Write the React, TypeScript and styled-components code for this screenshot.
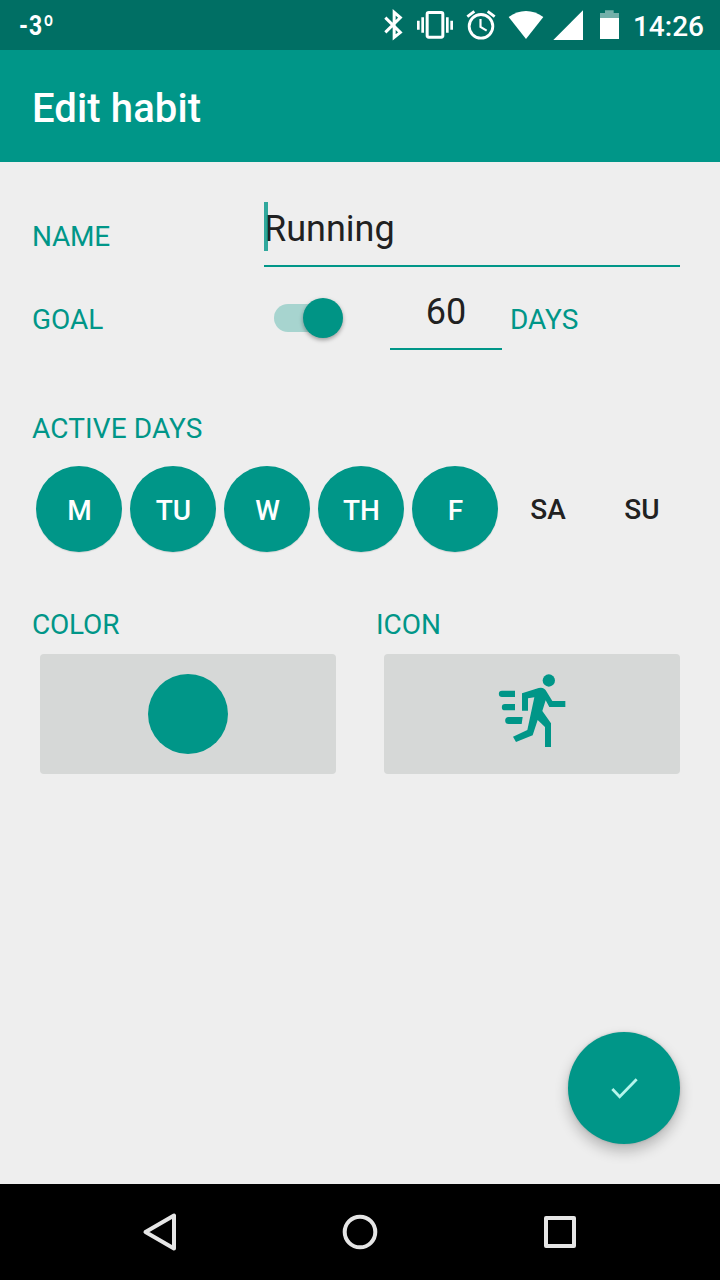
import React from "react";
import styled, { createGlobalStyle } from "styled-components";

const TEAL = "#009688";

const GlobalStyle = createGlobalStyle`
  body { margin: 0; background: #eeeeee; font-family: Roboto, "Noto Sans", sans-serif; }
  * { box-sizing: border-box; }
`;

const Screen = styled.div`
  width: 720px;
  height: 1280px;
  display: flex;
  flex-direction: column;
  background: #eeeeee;
  overflow: hidden;
`;

const StatusBar = styled.header`
  height: 50px;
  display: flex;
  justify-content: space-between;
  padding: 0 16px 0 19px;
  background: #006f64;
  color: #fff;
`;

const Temperature = styled.span`
  font-size: 28px;
  font-weight: 700;
  letter-spacing: 1.2px;
  line-height: 51px;
  transform: scaleX(0.82);
  transform-origin: left;
`;

const StatusIcons = styled.div`
  display: flex;
  svg { display: block; height: 50px; }
`;

const Clock = styled.span`
  margin-left: 13px;
  font-size: 28px;
  font-weight: 500;
  line-height: 53px;
`;

const AppBar = styled.div`
  height: 112px;
  padding-left: 32px;
  background: ${TEAL};
`;

const Title = styled.h1`
  margin: 0;
  color: #fff;
  font-size: 40px;
  font-weight: 500;
  letter-spacing: 0.12px;
  line-height: 117px;
`;

const Form = styled.main`
  flex: 1;
  display: flex;
  flex-direction: column;
  padding: 38px 40px 40px 32px;
`;

const Row = styled.div<{ $top?: number }>`
  display: flex;
  align-items: flex-start;
  margin-top: ${(p) => p.$top ?? 0}px;
`;

const Label = styled.span<{ $width?: number; $tracking?: number }>`
  display: block;
  width: ${(p) => (p.$width ? `${p.$width}px` : "auto")};
  color: ${TEAL};
  font-size: 28px;
  letter-spacing: ${(p) => p.$tracking ?? 0}px;
  line-height: 33px;
`;

const FieldLabel = styled(Label)`
  padding-top: 20px;
`;

const UnitLabel = styled(FieldLabel)`
  margin-left: 8px;
`;

const Field = styled.div<{ $width: number; $center?: boolean }>`
  position: relative;
  width: ${(p) => p.$width}px;
  height: 67px;
  border-bottom: 2px solid ${TEAL};
  color: #212121;
  font-size: 36px;
  line-height: 59px;
  text-align: ${(p) => (p.$center ? "center" : "left")};
`;

const Caret = styled.i`
  position: absolute;
  left: 0;
  top: 2px;
  width: 4px;
  height: 49px;
  background: rgba(0, 150, 136, 0.8);
`;

const Toggle = styled.div`
  display: flex;
  align-items: center;
  justify-content: flex-end;
  width: 69px;
  height: 28px;
  margin: 21px 47px 0 10px;
  border-radius: 14px;
  background: linear-gradient(to right, #a7d4cf 50px, transparent 50px);
`;

const Thumb = styled.div`
  width: 40px;
  height: 40px;
  flex: none;
  border-radius: 50%;
  background: #009485;
  box-shadow: 0 2px 4px rgba(0, 0, 0, 0.35);
`;

const Days = styled.div`
  display: flex;
  gap: 8px;
  margin: 21px 0 0 4px;
`;

const Day = styled.div<{ $active: boolean }>`
  flex: none;
  width: 86px;
  height: 86px;
  padding: ${(p) => (p.$active ? "0 0 0 1px" : "0 2px 0 0")};
  border-radius: 50%;
  background: ${(p) => (p.$active ? TEAL : "transparent")};
  color: ${(p) => (p.$active ? "#fff" : "#212121")};
  box-shadow: ${(p) => (p.$active ? "0 1px 1px rgba(0, 0, 0, 0.1)" : "none")};
  font-size: 28px;
  font-weight: 500;
  line-height: ${(p) => (p.$active ? 90 : 88)}px;
  text-align: center;
`;

const Pickers = styled.div`
  display: grid;
  grid-template-columns: 304px 304px;
  gap: 40px;
  margin-top: 56px;
`;

const PickerButton = styled.div`
  display: flex;
  align-items: center;
  justify-content: center;
  height: 120px;
  margin: 13px 0 0 8px;
  border-radius: 4px;
  background: #d6d8d7;
`;

const Swatch = styled.div`
  width: 80px;
  height: 80px;
  border-radius: 50%;
  background: ${TEAL};
`;

const Fab = styled.div`
  display: flex;
  align-items: center;
  justify-content: center;
  align-self: flex-end;
  width: 112px;
  height: 112px;
  margin-top: auto;
  border-radius: 50%;
  background: ${TEAL};
  box-shadow: 0 7px 14px rgba(0, 0, 0, 0.24), 0 0 3px rgba(0, 0, 0, 0.15);
`;

const NavBar = styled.nav`
  height: 96px;
  display: flex;
  justify-content: center;
  align-items: center;
  gap: 152px;
  background: #000;
`;

const navStroke = { fill: "none", stroke: "#e6e6e6", strokeWidth: 4, strokeLinejoin: "round" as const };

const Bluetooth = () => (
  <svg width="27" viewBox="38 0 81 150">
    <path d="M45 53 L90 97 L71.500 112 V37 L90 53 L45 97" fill="none" stroke="#fff" strokeWidth="9" />
  </svg>
);

const Vibrate = () => (
  <svg width="50" viewBox="120 0 150 150" fill="#fff">
    <rect x="171.500" y="37.500" width="47" height="74" rx="5" fill="none" stroke="#fff" strokeWidth="9" />
    <path d="M141 62h8v27h-8zM154 52h8v46h-8zM228 52h8v46h-8zM241 62h8v27h-8z" />
  </svg>
);

const Alarm = () => (
  <svg width="40" viewBox="270 0 120 150" fill="none" stroke="#fff">
    <circle cx="333" cy="79" r="35.500" strokeWidth="8.500" />
    <path d="M292 50 L313 34 M374 50 L353 34" strokeWidth="8.500" />
    <path d="M331.500 57 V81 L350 92" strokeWidth="6.500" />
  </svg>
);

const Wifi = () => (
  <svg width="50" viewBox="390 0 150 150">
    <path d="M416 51 Q440 33 468 33 Q496 33 520 51 L468 117Z" fill="#fff" />
  </svg>
);

const Signal = () => (
  <svg width="40" viewBox="540 0 120 150">
    <path d="M550 120 L639 31 V120Z" fill="#fff" />
  </svg>
);

const Battery = () => (
  <svg width="30" viewBox="660 0 90 150" fill="#fff">
    <path d="M690 54 V39 H705 V31 H731 V39 H747 V54Z" opacity="0.45" />
    <path d="M690 54 H747 V117 H690Z" />
  </svg>
);

const Runner = () => (
  <svg width="100" height="80" viewBox="6 42 300 240" fill={TEAL}>
    <circle cx="206.500" cy="61.500" r="18.500" />
    <path d="M66 92 H105 V111 H66 A9.500 9.500 0 0 1 66 92Z M75 132 H105 V151 H75 A9.500 9.500 0 0 1 75 132Z M86 171 H128 L125 192 H86 A10 10 0 0 1 86 171Z" />
    <path d="M126 152 V100 L176 84 Q192 80 199 94 L217 123 H256 V141 H208 L197 121 L187 153 L213 190 V261 H195 V201 L173 180 L158 226 L108 246 L99 230 L142 210 L163 112 L144 115 V152Z" />
  </svg>
);

const Check = () => (
  <svg width="32" height="28" viewBox="174 192 96 84">
    <path d="M187 237 L209 260 L260 208" fill="none" stroke="#b5f5ec" strokeWidth="8.500" />
  </svg>
);

const days = ["M", "TU", "W", "TH", "F", "SA", "SU"];

export default function App() {
  return (
    <Screen>
      <GlobalStyle />
      <StatusBar>
        <Temperature>-3º</Temperature>
        <StatusIcons>
          <Bluetooth />
          <Vibrate />
          <Alarm />
          <Wifi />
          <Signal />
          <Battery />
          <Clock>14:26</Clock>
        </StatusIcons>
      </StatusBar>
      <AppBar>
        <Title>Edit habit</Title>
      </AppBar>
      <Form>
        <Row>
          <FieldLabel $width={232} $tracking={-0.2}>NAME</FieldLabel>
          <Field $width={416}>
            <Caret />
            Running
          </Field>
        </Row>
        <Row $top={16}>
          <FieldLabel $width={232}>GOAL</FieldLabel>
          <Toggle>
            <Thumb />
          </Toggle>
          <Field $width={112} $center>
            60
          </Field>
          <UnitLabel>DAYS</UnitLabel>
        </Row>
        <Row $top={62}>
          <Label $tracking={0.12}>ACTIVE DAYS</Label>
        </Row>
        <Days>
          {days.map((d, i) => (
            <Day key={d} $active={i < 5}>
              {d}
            </Day>
          ))}
        </Days>
        <Pickers>
          <div>
            <Label $tracking={-0.2}>COLOR</Label>
            <PickerButton>
              <Swatch />
            </PickerButton>
          </div>
          <div>
            <Label>ICON</Label>
            <PickerButton>
              <Runner />
            </PickerButton>
          </div>
        </Pickers>
        <Fab>
          <Check />
        </Fab>
      </Form>
      <NavBar>
        <svg width="48" height="48" viewBox="136 1208 48 48">
          <path d="M145.500 1232 L174 1215.500 V1248.500Z" {...navStroke} />
        </svg>
        <svg width="48" height="48" viewBox="336 1208 48 48">
          <circle cx="360" cy="1232" r="15.300" {...navStroke} />
        </svg>
        <svg width="48" height="48" viewBox="536 1208 48 48">
          <rect x="546" y="1218" width="28" height="28" {...navStroke} />
        </svg>
      </NavBar>
    </Screen>
  );
}
